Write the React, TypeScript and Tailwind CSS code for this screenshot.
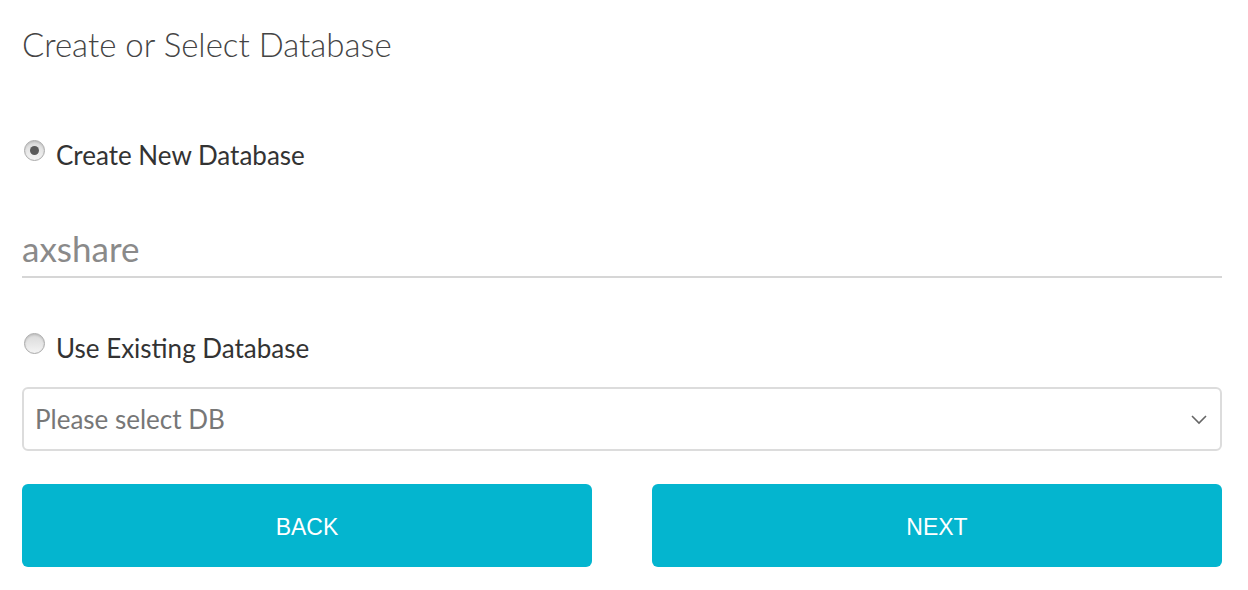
import React from "react";

function Radio({ checked }: { checked?: boolean }) {
  return (
    <span className="ml-[2px] mb-[9px] relative flex h-[21px] w-[21px] shrink-0 items-center justify-center rounded-full border border-[#a9a9a9] bg-gradient-to-b from-[#d9d9d9] to-[#f4f4f4] shadow-[inset_0_1px_2px_rgba(0,0,0,0.15)]">
      {checked && <span className="h-[9px] w-[9px] rounded-full bg-[#5a5a5a]" />}
    </span>
  );
}

export default function App() {
  return (
    <div className="w-[1248px] h-[590px] bg-white pl-[22px] pr-[26px] pt-[24px] font-['Lato',sans-serif] text-[#333]">
      <h1 className="text-[33px] font-light leading-[40px] text-[#444]">Create or Select Database</h1>

      <label className="mt-[76px] flex items-center gap-[11px]">
        <Radio checked />
        <span className="text-[26px] leading-[30px] text-[#333]">Create New Database</span>
      </label>

      <div className="mt-[57px] border-b-2 border-[#d6d6d6] pb-[7px]">
        <div className="text-[35px] leading-[42px] text-[#8a8a8a]">axshare</div>
      </div>

      <label className="mt-[55px] flex items-center gap-[11px]">
        <Radio />
        <span className="text-[26px] leading-[30px] text-[#333]">Use Existing Database</span>
      </label>

      <div className="mt-[24px] flex h-[64px] items-center justify-between rounded-[6px] border-2 border-[#dcdcdc] pl-[11px] pr-[12px]">
        <span className="text-[26px] text-[#777]">Please select DB</span>
        <svg width="18" height="12" viewBox="0 0 18 12" fill="none">
          <path d="M2 3l7 7 7-7" stroke="#666" strokeWidth="1.6" />
        </svg>
      </div>

      <div className="mt-[33px] flex gap-[60px]">
        <button className="flex h-[83px] flex-1 items-center justify-center rounded-[6px] bg-[#04b5cf] pt-[4px] font-['Liberation_Sans',sans-serif] text-[23px] text-white">
          BACK
        </button>
        <button className="flex h-[83px] flex-1 items-center justify-center rounded-[6px] bg-[#04b5cf] pt-[4px] font-['Liberation_Sans',sans-serif] text-[23px] text-white">
          NEXT
        </button>
      </div>
    </div>
  );
}
